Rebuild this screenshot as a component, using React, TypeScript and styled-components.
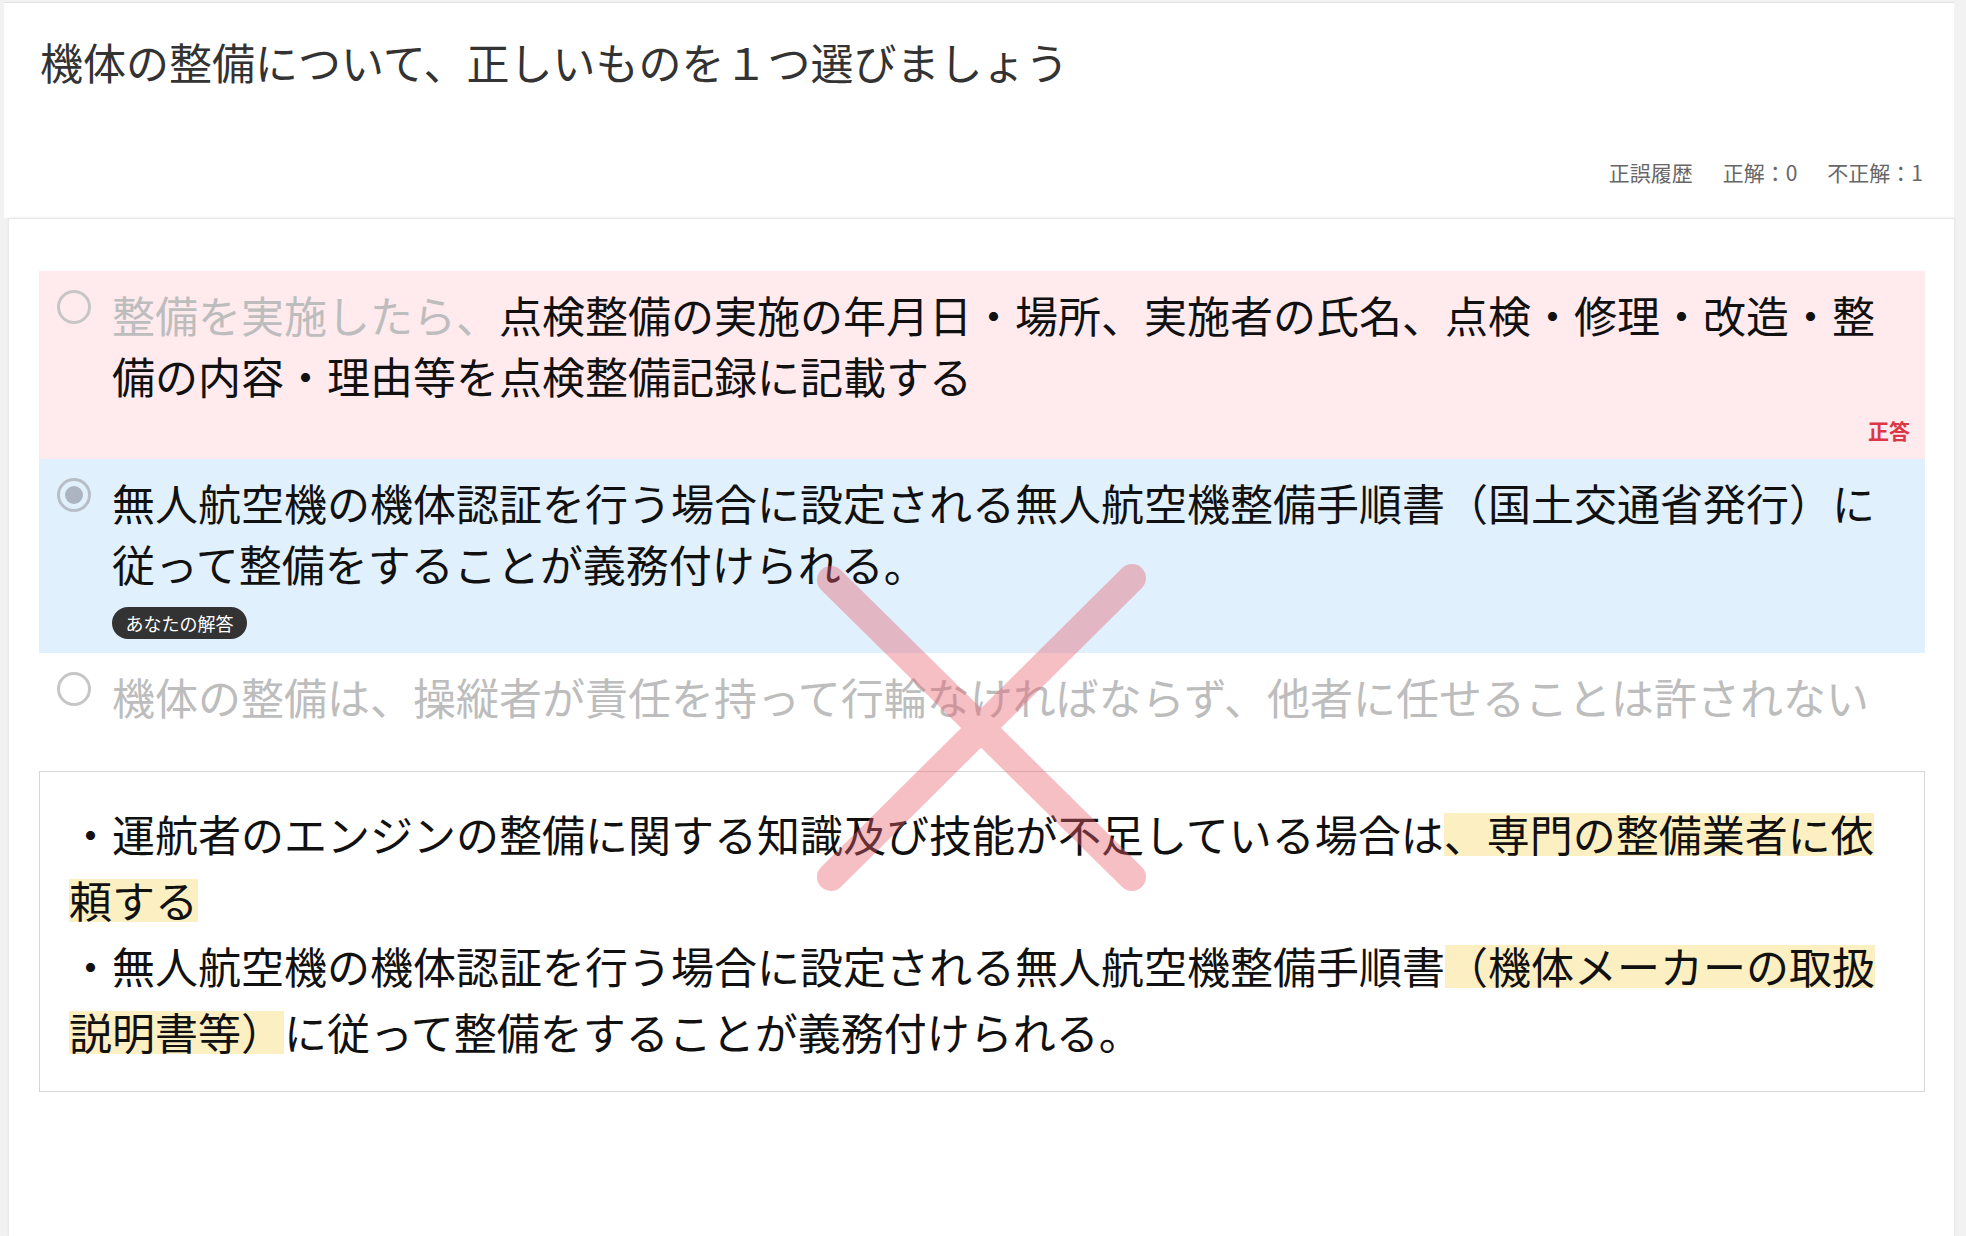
import React from 'react';
import styled, { createGlobalStyle } from 'styled-components';

const GlobalStyle = createGlobalStyle`
  html, body {
    margin: 0;
    padding: 0;
    background: #f2f2f2;
  }

  body {
    font-family: 'Noto Sans CJK JP', 'Noto Sans', sans-serif;
    text-spacing-trim: space-all;
    -webkit-font-smoothing: antialiased;
  }
`;

const Page = styled.div`
  display: flex;
  flex-direction: column;
  min-height: 100vh;
  box-sizing: border-box;
  padding: 2px 12px 0 4px;
`;

const Header = styled.header`
  background: #fff;
  border-top: 1px solid #e2e2e2;
  padding: 27px 31px 31px 36px;
`;

const Title = styled.h1`
  margin: 0;
  font-size: 43px;
  font-weight: 400;
  line-height: 62px;
  color: #333;
`;

const History = styled.div`
  display: flex;
  justify-content: flex-end;
  gap: 30px;
  margin-top: 65px;
  font-size: 21px;
  line-height: 30px;
  color: #666;
`;

const Card = styled.main`
  position: relative;
  flex: 1;
  margin-left: 5px;
  background: #fff;
  border-top: 1px solid #e6e6e6;
  box-shadow: 0 0 3px rgba(0, 0, 0, 0.1);
  padding: 52px 29px 120px 30px;
  overflow: hidden;
`;

type Tone = 'correct' | 'chosen' | 'plain';

const toneBg: Record<Tone, string> = {
  correct: '#ffebee',
  chosen: '#e1f0fd',
  plain: 'transparent',
};

const Option = styled.div<{ $tone: Tone }>`
  display: grid;
  grid-template-columns: 34px 1fr;
  column-gap: 21px;
  align-items: start;
  padding: 13px 15px 14px 18px;
  background: ${(p) => toneBg[p.$tone]};
`;

const Radio = styled.span<{ $checked?: boolean }>`
  position: relative;
  box-sizing: border-box;
  width: 34px;
  height: 34px;
  margin-top: 6px;
  border-radius: 50%;
  border: 3px solid ${(p) => (p.$checked ? '#b7bec7' : '#c6c6c6')};

  &::after {
    content: '';
    display: ${(p) => (p.$checked ? 'block' : 'none')};
    position: absolute;
    inset: 5px;
    border-radius: 50%;
    background: #abb4c0;
  }
`;

const Body = styled.div`
  display: flex;
  flex-direction: column;
  align-items: flex-start;
  min-width: 0;
`;

const OptionText = styled.p<{ $muted?: boolean }>`
  margin: 0;
  font-size: 43px;
  line-height: 61px;
  color: ${(p) => (p.$muted ? '#bdbdbd' : '#111')};
`;

const Faded = styled.span`
  color: #bdbdbd;
`;

const CorrectLabel = styled.span`
  align-self: flex-end;
  margin-top: 9px;
  font-size: 21px;
  line-height: 30px;
  font-weight: 700;
  color: #dc3545;
`;

const YourAnswer = styled.span`
  margin-top: 13px;
  height: 32px;
  padding: 0 13.5px;
  border-radius: 16px;
  background: #333;
  color: #fff;
  font-size: 18px;
  line-height: 32px;
`;

const Explanation = styled.section`
  margin-top: 30px;
  border: 1px solid #d6d6d6;
  padding: 28px 30px 27px 29px;
  font-size: 43px;
  line-height: 66px;
  color: #111;
`;

const Marker = styled.span`
  background: linear-gradient(
    to bottom,
    transparent 0.25em,
    #fcefc2 0.25em,
    #fcefc2 1.25em,
    transparent 1.25em
  );
`;

const Cross = styled.svg`
  position: absolute;
  left: 796px;
  top: 333px;
  pointer-events: none;
`;

const CrossMark = () => (
  <Cross width="350" height="350" viewBox="0 0 350 350">
    <g opacity="0.4" stroke="#e8606e" strokeWidth="28" strokeLinecap="round">
      <line x1="26" y1="28" x2="327" y2="325" />
      <line x1="327" y1="26" x2="26" y2="325" />
    </g>
  </Cross>
);

const App = () => (
  <>
    <GlobalStyle />
    <Page>
      <Header>
        <Title>機体の整備について、正しいものを１つ選びましょう</Title>
        <History>
          <span>正誤履歴</span>
          <span>正解：0</span>
          <span>不正解：1</span>
        </History>
      </Header>
      <Card>
        <Option $tone="correct">
          <Radio />
          <Body>
            <OptionText>
              <Faded>整備を実施したら、</Faded>
              点検整備の実施の年月日・場所、実施者の氏名、点検・修理・改造・整備の内容・理由等を点検整備記録に記載する
            </OptionText>
            <CorrectLabel>正答</CorrectLabel>
          </Body>
        </Option>
        <Option $tone="chosen">
          <Radio $checked />
          <Body>
            <OptionText>
              無人航空機の機体認証を行う場合に設定される無人航空機整備手順書（国土交通省発行）に従って整備をすることが義務付けられる。
            </OptionText>
            <YourAnswer>あなたの解答</YourAnswer>
          </Body>
        </Option>
        <Option $tone="plain">
          <Radio />
          <Body>
            <OptionText $muted>
              機体の整備は、操縦者が責任を持って行輪なければならず、他者に任せることは許されない
            </OptionText>
          </Body>
        </Option>
        <Explanation>
          ・運航者のエンジンの整備に関する知識及び技能が不足している場合は
          <Marker>、専門の整備業者に依頼する</Marker>
          <br />
          ・無人航空機の機体認証を行う場合に設定される無人航空機整備手順書
          <Marker>（機体メーカーの取扱説明書等）</Marker>
          に従って整備をすることが義務付けられる。
        </Explanation>
        <CrossMark />
      </Card>
    </Page>
  </>
);

export default App;
